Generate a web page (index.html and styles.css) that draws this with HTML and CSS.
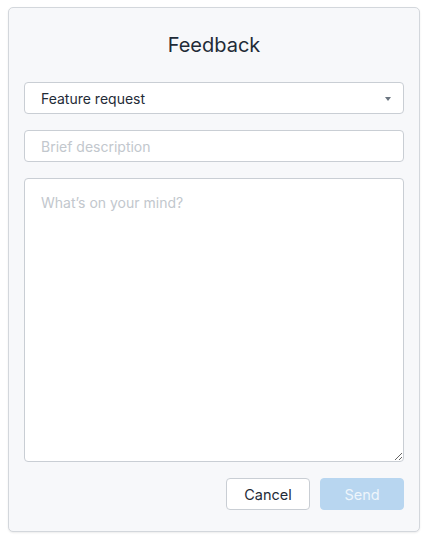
FILE: index.html
```html
<!DOCTYPE html>
<html>
<head>
<meta charset="utf-8">
<link rel="stylesheet" href="styles.css">
</head>
<body>
<form class="card">
  <h1 class="title">Feedback</h1>
  <div class="select">
    <span class="select-text">Feature request</span>
    <span class="caret"></span>
  </div>
  <input class="field" type="text" placeholder="Brief description">
  <div class="textarea-wrap">
    <textarea class="area" placeholder="What’s on your mind?"></textarea>
  </div>
  <div class="actions">
    <button type="button" class="btn cancel">Cancel</button>
    <button type="button" class="btn send">Send</button>
  </div>
</form>
</body>
</html>
```
FILE: styles.css
```css
html, body { margin: 0; padding: 0; background: #ffffff; }
body { padding: 7px 8px 10px 8px; font-family: Inter, "Noto Sans", sans-serif; }
.card {
  box-sizing: border-box;
  width: 412px;
  height: 525px;
  background: #f7f8fa;
  border: 1px solid #d3d7dc;
  border-radius: 5px;
  box-shadow: 0 1px 2px rgba(0,0,0,0.08);
  padding: 0 15px 20px 15px;
  display: flex;
  flex-direction: column;
}
.title {
  margin: 0;
  height: 74px;
  display: flex; align-items: center; justify-content: center;
  font-size: 20px; font-weight: 400; color: #1f2b37;
  padding-bottom: 1px;
  box-sizing: border-box;
}
.select, .field {
  box-sizing: border-box;
  height: 32px;
  width: 100%;
  background: #fff;
  border: 1px solid #c9ced4;
  border-radius: 4px;
}
.select {
  display: flex; align-items: center; justify-content: space-between;
  padding: 0 12px 0 16px;
  font-size: 14px; color: #1f2b37;
}
.caret {
  width: 0; height: 0;
  border-left: 3px solid transparent; border-right: 3px solid transparent;
  border-top: 4px solid #6b7580;
  margin-top: 2px;
}
.field {
  margin-top: 16px;
  padding: 0 16px;
  font-family: inherit; font-size: 14px; color: #1f2b37;
  outline: none;
}
.field::placeholder, .area::placeholder { color: #c2c7cd; }
.textarea-wrap { margin-top: 16px; display: flex; }
.area {
  box-sizing: border-box;
  width: 100%;
  height: 284px;
  background: #fff;
  border: 1px solid #c9ced4;
  border-radius: 4px;
  padding: 15px 16px;
  font-family: inherit; font-size: 14px; color: #1f2b37;
  resize: vertical; outline: none;
}
.actions {
  display: flex; justify-content: flex-end; gap: 10px;
  margin-top: 16px;
}
.btn {
  box-sizing: border-box;
  width: 84px; height: 32px;
  border-radius: 4px;
  font-family: inherit; font-size: 14.5px;
}
.cancel { background: #fff; border: 1px solid #c9ced4; color: #1f2b37; }
.send { background: #b8d6f0; border: 1px solid #b8d6f0; color: #eef5fb; }
```
